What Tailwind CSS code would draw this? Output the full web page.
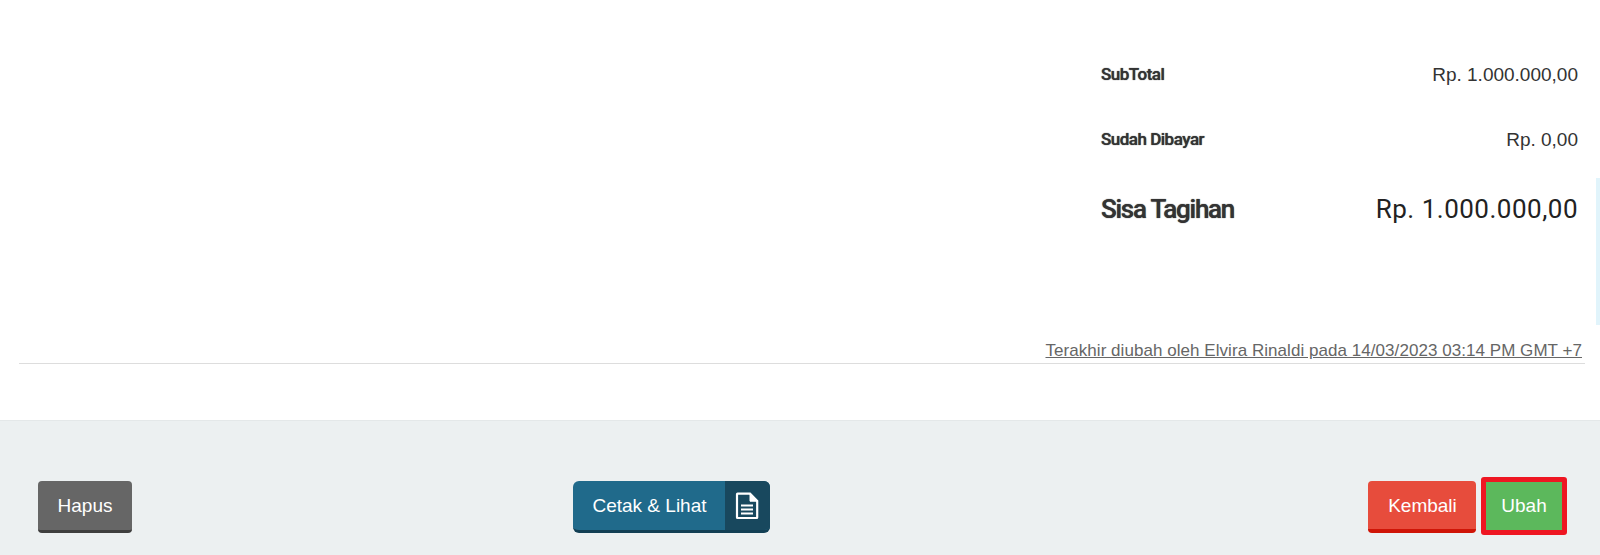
<!DOCTYPE html>
<html>
<head>
<meta charset="utf-8">
<script src="https://cdn.jsdelivr.net/npm/@tailwindcss/browser@4"></script>
</head>
<body class="bg-white overflow-hidden">
<div class="relative w-[1600px] h-[555px] flex flex-col font-['Liberation_Sans',sans-serif]">
  <div class="absolute right-0 top-[178px] w-1 h-[147px] bg-[#e1f4fb]"></div>
  <main class="h-[420px] pl-[19px] pr-[15px] flex flex-col">
    <div class="ml-auto w-[477px] mr-[7px] pt-[60px] flex flex-col text-[#333]">
      <div class="flex justify-between items-center h-[30px]">
        <span class="font-['Roboto',sans-serif] font-medium text-[17px] tracking-[-0.5px] [text-shadow:0_0_1px_#333]">SubTotal</span>
        <span class="text-[19px]">Rp. 1.000.000,00</span>
      </div>
      <div class="flex justify-between items-center h-[30px] mt-[35px]">
        <span class="font-['Roboto',sans-serif] font-medium text-[17px] tracking-[-0.5px] [text-shadow:0_0_1px_#333]">Sudah Dibayar</span>
        <span class="text-[19px]">Rp. 0,00</span>
      </div>
      <div class="flex justify-between items-center h-[40px] mt-[34px]">
        <span class="font-['Roboto',sans-serif] font-medium text-[26px] tracking-[-1.25px] [text-shadow:0_0_1px_#333]">Sisa Tagihan</span>
        <span class="font-['Roboto',sans-serif] text-[26px] tracking-[0.5px] text-[#222]">Rp. 1.000.000,00</span>
      </div>
    </div>
    <div class="mt-[112px] border-b border-[#ddd] h-[23px] pt-[1px] flex justify-end items-start pr-[3px]">
      <span class="text-[17px] leading-[18px] tracking-[0.05px] text-[#666] underline">Terakhir diubah oleh Elvira Rinaldi pada 14/03/2023 03:14 PM GMT +7</span>
    </div>
  </main>
  <footer class="flex-1 bg-[#ecf0f1] border-t border-[#e4e8e9] pl-[38px] pr-[33px] pt-[60px] flex items-start justify-between text-white text-[19px]">
    <button class="w-[94px] h-[52px] pt-[2px] bg-[#666] border-b-[3px] border-[#3f3f3f] rounded-[4px]">Hapus</button>
    <div class="flex w-[197px] h-[52px] rounded-[6px] overflow-hidden border-b-[3px] border-[#123f54] bg-[#206a8b] ml-[2px] mr-[160px]">
      <span class="w-[152px] pl-[2px] pt-[2px] flex items-center justify-center">Cetak &amp; Lihat</span>
      <span class="flex-1 bg-[#18485e] flex items-center justify-center">
        <svg width="24" height="28" viewBox="0 0 24 28" fill="none" stroke="white" stroke-width="2.2">
          <path d="M2 2.2a.5.5 0 0 1 .5-.5H15L22.2 9v16.5a.5.5 0 0 1-.5.5H2.5a.5.5 0 0 1-.5-.5z"/>
          <path d="M15 2v7.2h7z" fill="white" stroke-width="1"/>
          <path d="M6 13.5h12M6 17.5h12M6 21.5h12" stroke-width="2"/>
        </svg>
      </span>
    </div>
    <div class="flex items-start">
      <button class="w-[108px] h-[52px] pl-[1px] pt-[2px] bg-[#e74c3c] border-b-[4px] border-[#cf1507] rounded-[4px]">Kembali</button>
      <button class="w-[86px] h-[58px] -mt-[4px] ml-[5px] bg-[#5cb85c] border-[5px] border-[#ee1622] rounded-[3px]">Ubah</button>
    </div>
  </footer>
</div>
</body>
</html>
